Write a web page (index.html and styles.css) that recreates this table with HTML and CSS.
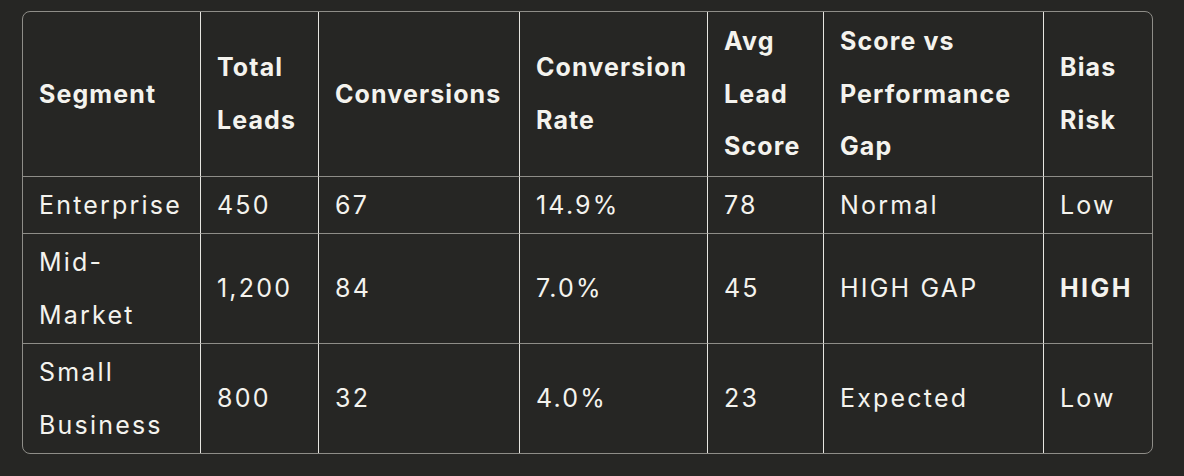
FILE: index.html
```html
<!DOCTYPE html>
<html lang="en">
<head>
<meta charset="utf-8">
<title>Segment Bias Risk</title>
<link rel="stylesheet" href="styles.css">
</head>
<body>
<div class="table-wrap">
  <table class="data">
    <colgroup>
      <col class="c1"><col class="c2"><col class="c3"><col class="c4"><col class="c5"><col class="c6"><col class="c7">
    </colgroup>
    <thead>
      <tr>
        <th>Segment</th>
        <th>Total Leads</th>
        <th>Conversions</th>
        <th>Conversion Rate</th>
        <th>Avg Lead Score</th>
        <th>Score vs Performance Gap</th>
        <th>Bias Risk</th>
      </tr>
    </thead>
    <tbody>
      <tr>
        <td>Enterprise</td>
        <td>450</td>
        <td>67</td>
        <td>14.9%</td>
        <td>78</td>
        <td>Normal</td>
        <td>Low</td>
      </tr>
      <tr>
        <td>Mid-Market</td>
        <td>1,200</td>
        <td>84</td>
        <td>7.0%</td>
        <td>45</td>
        <td>HIGH GAP</td>
        <td><strong>HIGH</strong></td>
      </tr>
      <tr>
        <td>Small Business</td>
        <td>800</td>
        <td>32</td>
        <td>4.0%</td>
        <td>23</td>
        <td>Expected</td>
        <td>Low</td>
      </tr>
    </tbody>
  </table>
</div>
</body>
</html>
```

FILE: styles.css
```css
html, body {
  margin: 0;
  padding: 0;
  background: #262624;
}

body {
  padding: 11px 32px 0 22px;
  font-family: Inter, "Noto Sans", sans-serif;
  color: #f4f3ee;
}

.table-wrap {
  width: 1131px;
  box-sizing: border-box;
  border: 1px solid #8e8d88;
  border-radius: 8px;
  overflow: hidden;
}

.data {
  border-collapse: separate;
  border-spacing: 0;
  table-layout: fixed;
  width: 1129px;
  font-size: 25px;
  line-height: 52.5px;
}

.c1 { width: 178px; }
.c2 { width: 118px; }
.c3 { width: 201px; }
.c4 { width: 188px; }
.c5 { width: 116px; }
.c6 { width: 220px; }
.c7 { width: 108px; }

.data th,
.data td {
  box-sizing: border-box;
  text-align: left;
  vertical-align: middle;
  padding: 2px 6px 2px 16px;
  border-right: 1px solid #e6e5e0;
  border-bottom: 1px solid #8e8d88;
}

.data th {
  padding-top: 3px;
  padding-bottom: 3px;
  font-weight: 700;
  letter-spacing: 1.1px;
}

.data th:last-child,
.data td:last-child {
  border-right: none;
}

.data tbody tr:last-child td {
  border-bottom: none;
}

.data td {
  font-weight: 400;
  letter-spacing: 2.2px;
}

.data strong {
  font-weight: 700;
  letter-spacing: 2.4px;
}
```
